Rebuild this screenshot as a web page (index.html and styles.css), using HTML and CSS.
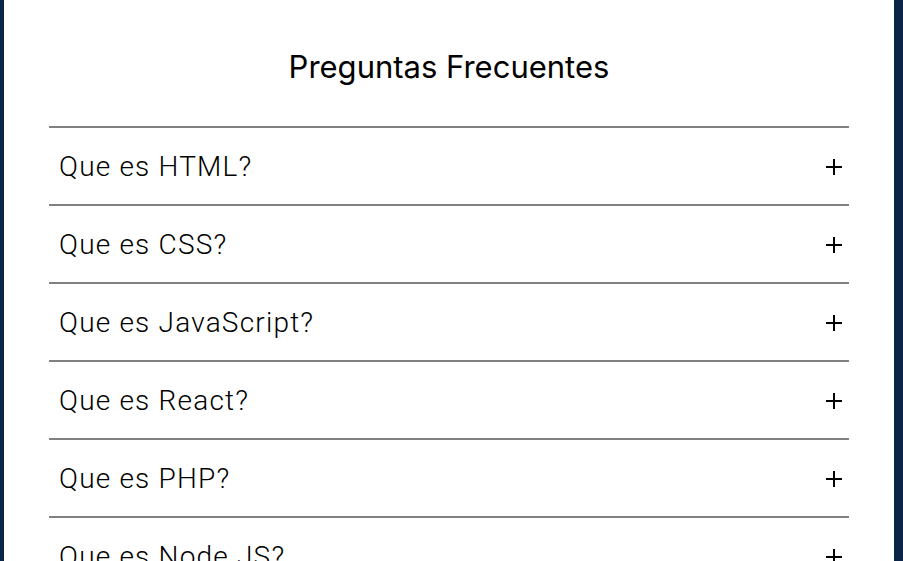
FILE: index.html
```html
<!DOCTYPE html>
<html lang="es">
<head>
<meta charset="utf-8">
<title>Preguntas Frecuentes</title>
<link rel="stylesheet" href="styles.css">
</head>
<body>
<main class="page">
  <h1 class="title">Preguntas Frecuentes</h1>
  <div class="faq">
    <div class="faq-item"><span class="question">Que es HTML?</span><svg class="plus" viewBox="0 0 16 16"><path d="M0 8H16M8 0V16"/></svg></div>
    <div class="faq-item"><span class="question">Que es CSS?</span><svg class="plus" viewBox="0 0 16 16"><path d="M0 8H16M8 0V16"/></svg></div>
    <div class="faq-item"><span class="question">Que es JavaScript?</span><svg class="plus" viewBox="0 0 16 16"><path d="M0 8H16M8 0V16"/></svg></div>
    <div class="faq-item"><span class="question">Que es React?</span><svg class="plus" viewBox="0 0 16 16"><path d="M0 8H16M8 0V16"/></svg></div>
    <div class="faq-item"><span class="question">Que es PHP?</span><svg class="plus" viewBox="0 0 16 16"><path d="M0 8H16M8 0V16"/></svg></div>
    <div class="faq-item"><span class="question">Que es Node JS?</span><svg class="plus" viewBox="0 0 16 16"><path d="M0 8H16M8 0V16"/></svg></div>
  </div>
</main>
</body>
</html>
```

FILE: styles.css
```css
html, body {
  margin: 0;
  padding: 0;
  height: 100%;
  overflow: hidden;
}
body {
  background: #0b2447;
  font-family: Roboto, "Liberation Sans", sans-serif;
  color: #000;
}
.page {
  margin-left: 4px;
  width: 890px;
  min-height: 100%;
  box-sizing: border-box;
  background: #fff;
  padding: 0 45px;
}
.title {
  margin: 0;
  padding-top: 47px;
  margin-bottom: 40px;
  font-family: Inter, Roboto, sans-serif;
  font-weight: 400;
  font-size: 31px;
  line-height: 39px;
  text-align: center;
}
.faq-item {
  border-top: 2px solid #808080;
  height: 76px;
  display: flex;
  align-items: center;
  justify-content: space-between;
  padding: 0 7px 0 10px;
}
.question {
  font-size: 28px;
  font-weight: 300;
  line-height: 32px;
  letter-spacing: 1.2px;
  margin-top: 2px;
}
.plus {
  width: 16px;
  height: 16px;
  margin-top: 2px;
  stroke: #000;
  stroke-width: 2;
  fill: none;
}
```
